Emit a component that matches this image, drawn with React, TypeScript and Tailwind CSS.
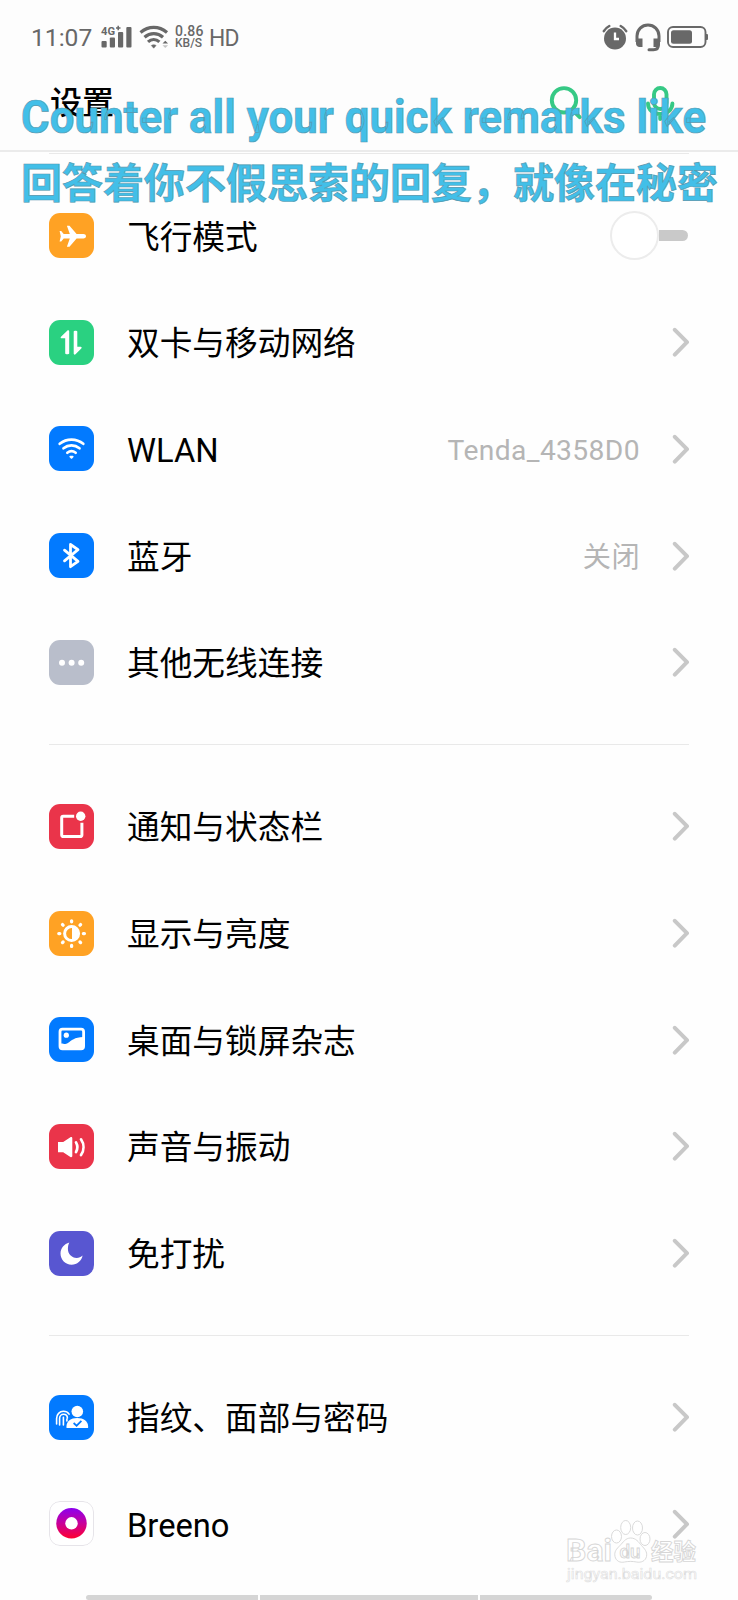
import { useState } from 'react';
import type { ReactNode } from 'react';

interface Item {
  label: string;
  color: string;
  icon: ReactNode;
  value?: string;
  toggle?: boolean;
}

const line = { fill: 'none', stroke: '#fff', strokeLinecap: 'round', strokeLinejoin: 'round' } as const;

// Todos los iconos se dibujan sobre una caja de 45x45
const AirplaneIcon = (
  <path
    fill="#fff"
    d="M37 23.2c0-1.300-1.100-2.200-2.600-2.200h-6.800L20.500 12.700h-2.600l2.900 8.300h-6.100l-2.500-3.100h-1.600l1.200 5.300-1.200 5.300h1.600l2.500-3.100h6.100l-2.900 8.300h2.600l7.100-8.300h6.800c1.500 0 2.600-.9 2.600-2.200z"
  />
);

const DataIcon = (
  <>
    <path fill="#fff" d="M20.200 11.500v22c0 .9-4 .9-4 0V18.300h-3.700c-.9 0-1.100-1-.5-1.600l6.200-6c.8-.7 2-.4 2 .8z" />
    <path fill="#fff" d="M24.700 33.500v-22c0-.9 3.600-.9 3.600 0v15.300h3.500c.9 0 1.100 1 .5 1.600l-5.800 5.900c-.7.700-1.800.3-1.800-.8z" />
  </>
);

const WlanIcon = (
  <g {...line} strokeWidth="2.700">
    <path d="M10.700 17.800c7-5.600 16.700-5.600 23.600 0" />
    <path d="M14.500 22.300c4.700-3.800 11.300-3.800 16 0" />
    <path d="M18.300 26.700c2.500-1.900 5.900-1.900 8.400 0" />
    <path d="M21.300 30.600h2.400l-1.200 1.200z" strokeWidth="1.800" fill="#fff" />
  </g>
);

const BluetoothIcon = <path {...line} strokeWidth="2.800" d="M15.500 17.200l13.500 11.100-7.500 5.400V11.500l7.500 5.200L15.500 27.800" />;

const DotsIcon = (
  <g fill="#fff">
    <circle cx="13" cy="22.700" r="3" />
    <circle cx="22.600" cy="22.700" r="3" />
    <circle cx="32.200" cy="22.700" r="3" />
  </g>
);

const NoticeIcon = (
  <>
    <path {...line} strokeWidth="3" strokeLinecap="butt" d="M25.200 12.200H14.300a1.600 1.600 0 0 0-1.600 1.600v17.200a1.600 1.600 0 0 0 1.600 1.600h17a1.600 1.600 0 0 0 1.600-1.600V18.800" />
    <circle cx="31.700" cy="12.300" r="4.700" fill="#fff" />
  </>
);

const BrightnessIcon = (
  <>
    <g {...line} strokeWidth="3.300">
      <path d="M22.600 9.800v1M22.600 34.400v1M9.800 22.600h1M34.400 22.600h1M13.500 13.600l.6.600M31 31l.6.600M31.600 13.600l-.6.600M14.100 31l-.6.600" />
    </g>
    <circle cx="22.600" cy="22.600" r="7" fill="none" stroke="#fff" strokeWidth="3" />
    <path fill="#fff" d="M23 15.800a6.800 6.800 0 0 1 0 13.600z" />
  </>
);

const WallpaperIcon = (
  <>
    <rect x="11" y="12.200" width="23.600" height="19.600" rx="2.500" {...line} strokeWidth="2.800" />
    <circle cx="17.300" cy="18.200" r="2.600" fill="#fff" />
    <path fill="#fff" d="M11 26.500c3-.6 4.800 1.600 7.500-.2 4.500-3 6.500-6 16-6.300v11.800H11z" />
  </>
);

const SoundIcon = (
  <>
    <path fill="#fff" d="M9 18h5.200l7.200-4.700c.9-.6 1.900-.2 1.900.9V32c0 1.100-1 1.500-1.900.9l-7.200-4.700H9z" />
    <g {...line} strokeWidth="2.700">
      <path d="M27 18.300c1.700 3 1.700 6.800 0 9.800" />
      <path d="M32 15.300c3.300 4.800 3.300 11 0 15.800" />
    </g>
  </>
);

const MoonIcon = (
  <path fill="#fff" d="M20.300 11.500c-5 1.300-8.800 5.700-8.800 11 0 6.200 4.900 11.200 11.100 11.200 5.500 0 10-3.900 11-9.200-1.700 1.500-3.600 2.400-5.900 2.400-5 0-8.800-4-8.800-8.900 0-2.400.4-4.600 1.400-6.500z" />
);

const FingerprintIcon = (
  <>
    <g {...line} strokeWidth="1.600">
      <path d="M7.600 29v-5.500c0-4.200 3-7.200 6.800-7.200 2.600 0 4.500 1.100 5.700 2.800" />
      <path d="M10.600 30v-6.500c0-2.400 1.700-4.200 3.900-4.200 2.200 0 3.900 1.500 3.900 3.800" />
      <path d="M14.400 30v-7.700M17.900 26v-2" />
    </g>
    <circle cx="28.300" cy="16.500" r="5.800" fill="#fff" />
    <path fill="#fff" d="M17.500 32.900v-1.600c0-5 4.300-8.300 10.700-8.300s10.900 3.300 10.900 8.300v1.600z" />
    <path fill="none" stroke="#027aff" strokeWidth="1.700" d="M24.600 28l3 2.700 4.800-4.900" />
  </>
);

const BreenoIcon = (
  <>
    <defs>
      <linearGradient id="breeno" x1="0" y1="0" x2="0" y2="1">
        <stop offset="0" stopColor="#8c00ef" />
        <stop offset="0.500" stopColor="#c8009a" />
        <stop offset="1" stopColor="#ff0030" />
      </linearGradient>
    </defs>
    <rect x="0.500" y="0.500" width="44" height="44" rx="10.500" fill="#fff" stroke="#e6e4e9" />
    <circle cx="22.500" cy="22.300" r="15.200" fill="url(#breeno)" />
    <circle cx="22.500" cy="22.300" r="6.200" fill="#fff" />
  </>
);

const GROUPS: Item[][] = [
  [
    { label: '飞行模式', color: 'bg-[#ffa224]', icon: AirplaneIcon, toggle: true },
    { label: '双卡与移动网络', color: 'bg-[#2ad181]', icon: DataIcon },
    { label: 'WLAN', color: 'bg-[#027aff]', icon: WlanIcon, value: 'Tenda_4358D0' },
    { label: '蓝牙', color: 'bg-[#027aff]', icon: BluetoothIcon, value: '关闭' },
    { label: '其他无线连接', color: 'bg-[#b9becb]', icon: DotsIcon },
  ],
  [
    { label: '通知与状态栏', color: 'bg-[#ea344a]', icon: NoticeIcon },
    { label: '显示与亮度', color: 'bg-[#ffa224]', icon: BrightnessIcon },
    { label: '桌面与锁屏杂志', color: 'bg-[#027aff]', icon: WallpaperIcon },
    { label: '声音与振动', color: 'bg-[#ea344a]', icon: SoundIcon },
    { label: '免打扰', color: 'bg-[#5856d1]', icon: MoonIcon },
  ],
  [
    { label: '指纹、面部与密码', color: 'bg-[#027aff]', icon: FingerprintIcon },
    { label: 'Breeno', color: 'bg-white', icon: BreenoIcon },
  ],
];

function StatusBar() {
  return (
    <div className="flex h-[74px] items-center pl-[31px] pr-[30px] text-[#686868]">
      <span className="w-[69px] pt-[2px] text-[24.600px] leading-none">11:07</span>
      {/* Señal */}
      <svg className="h-[24px] w-[32px]" viewBox="0 0 32 24" fill="#686868">
        <text x="1" y="9.500" fontSize="11" fontWeight="700" textLength="14" lengthAdjust="spacingAndGlyphs">4G</text>
        <path d="M16 3h4.500M18.200 0.800v4.500" stroke="#686868" strokeWidth="1.500" />
        <rect x="1.500" y="16" width="5.200" height="6.500" rx="1" />
        <rect x="9.800" y="12.500" width="5.200" height="10" rx="1" />
        <rect x="18" y="7" width="5.200" height="15.500" rx="1" />
        <rect x="26.300" y="2" width="5.200" height="20.500" rx="1" />
      </svg>
      {/* Wifi */}
      <svg className="ml-[7px] h-[24px] w-[30px]" viewBox="0 0 30 24" fill="none" stroke="#686868" strokeWidth="3.200">
        <path d="M1.500 7.500c8-6.800 18.500-6.800 26.500 0" />
        <path d="M5.500 12.200c5.500-4.800 13-4.800 18.500 0" />
        <path d="M9 16.900c3.400-3 8-3 11.400 0" />
        <path d="M12.300 20.500l2.400 2.700 2.400-2.700c-1.500-1.100-3.300-1.100-4.800 0z" fill="#686868" strokeWidth="0.500" />
        <path d="M23.500 18.500l2.800-2.700 2.800 2.700z" fill="#686868" stroke="none" />
        <path d="M23.500 20.300h5.600l-2.800 2.700z" fill="#c4c4c4" stroke="none" />
      </svg>
      <span className="ml-[6px] flex w-[34px] flex-col text-[12px] font-medium leading-[12px]">
        <span className="text-[14px] tracking-[0.200px]">0.86</span>
        <span>KB/S</span>
      </span>
      <span className="origin-left scale-x-[0.930] pt-[2px] text-[24.600px] leading-none tracking-[-1px]">HD</span>

      <div className="ml-auto flex items-center">
        {/* Alarma */}
        <svg className="h-[26px] w-[26px]" viewBox="0 0 26 26" fill="#686868">
          <circle cx="13" cy="14.500" r="11" />
          <path d="M1.800 7.200C3 5 5 3.200 7.300 2M24.200 7.200C23 5 21 3.200 18.700 2" fill="none" stroke="#686868" strokeWidth="2.500" strokeLinecap="round" />
          <path d="M13 8.500v6.500h4" fill="none" stroke="#fff" strokeWidth="2.300" />
        </svg>
        {/* Auriculares */}
        <svg className="ml-[7px] h-[29px] w-[26px]" viewBox="0 0 26 29" fill="none" stroke="#686868" strokeWidth="3">
          <path d="M2 19v-6C2 6.500 7 2 13 2s11 4.500 11 11v6" />
          <path d="M1 15.500h6.500V24H4.500C2.500 24 1 22.500 1 20.500zM25 15.500h-6.500V24h3c2 0 3.500-1.500 3.500-3.500z" fill="#686868" stroke="none" />
          <path d="M23.500 21.500c0 3.500-2 5.300-5 5.300h-4.500" strokeLinecap="round" />
        </svg>
        {/* Bateria */}
        <svg className="ml-[6px] h-[22px] w-[41px]" viewBox="0 0 41 22" fill="#686868">
          <rect x="1" y="1" width="37.500" height="20" rx="5" fill="none" stroke="#686868" strokeWidth="1.900" />
          <rect x="4" y="4.200" width="21" height="13.600" rx="2.500" />
          <path d="M39 8h1a1 1 0 0 1 1 1v4a1 1 0 0 1-1 1h-1z" />
        </svg>
      </div>
    </div>
  );
}

function Header() {
  return (
    <div className="flex h-[78px] items-start border-b-2 border-[#ebebeb] pl-[50px] pr-[61px]">
      <h1 className="mt-[10px] text-[32px] font-medium leading-[38px] text-black">设置</h1>
      <svg className="ml-auto mt-[11px] h-[36px] w-[34px]" viewBox="0 0 34 36" fill="none" stroke="#36c985" strokeWidth="3.900" strokeLinecap="round">
        <circle cx="15" cy="15.300" r="12.200" />
        <path d="M24 25.500l6.700 6.700" />
      </svg>
      <svg className="ml-[60px] mt-[11px] h-[38px] w-[34px]" viewBox="0 0 34 38" fill="none" stroke="#36c985" strokeWidth="3.900" strokeLinecap="round">
        <rect x="11" y="3" width="12.500" height="21" rx="6.250" />
        <path d="M5 18.500c0 6 5 10.500 12.200 10.500s12.200-4.500 12.200-10.500M17.200 29v5" />
      </svg>
    </div>
  );
}

function Switch() {
  const [on, setOn] = useState(false);
  return (
    <button type="button" role="switch" aria-checked={on} onClick={() => setOn(v => !v)} className="mr-[1px] flex w-[78px] items-center">
      {on && <span className="h-[11px] flex-1 rounded-l-full bg-[#2ad181]" />}
      <span className="h-[49px] w-[49px] rounded-full border-2 border-[#ececec] bg-white" />
      {!on && <span className="h-[11px] flex-1 rounded-r-full bg-[#c9c9c9]" />}
    </button>
  );
}

function Row({ item }: { item: Item }) {
  return (
    <div className="flex h-[106.700px] items-center">
      <div className={`h-[45px] w-[45px] overflow-hidden rounded-[11px] ${item.color}`}>
        <svg className="h-full w-full" viewBox="0 0 45 45">{item.icon}</svg>
      </div>
      <span className="ml-[33px] pt-[4px] text-[32.700px] leading-[48px] text-black">{item.label}</span>
      <div className="ml-auto flex items-center">
        {item.value && (
          <span className="mr-[31px] pt-[4px] text-[28.200px] leading-[40px] tracking-[0.400px] text-[#b5b5b5]">{item.value}</span>
        )}
        {item.toggle ? (
          <Switch />
        ) : (
          <svg className="h-[30px] w-[18px]" viewBox="0 0 18 30" fill="none" stroke="#c8c8c8" strokeWidth="4" strokeLinecap="round" strokeLinejoin="round">
            <path d="M3.800 2.800L16 15.200 3.800 27.600" />
          </svg>
        )}
      </div>
    </div>
  );
}

// Marca de agua de la esquina inferior
function Watermark() {
  return (
    <svg className="absolute left-[560px] top-[1515px] h-[75px] w-[145px]" viewBox="0 0 145 75" fill="#fff" stroke="#d6d6d6" strokeWidth="0.900">
      <text x="6" y="46" fontSize="31" fontWeight="700" textLength="46" lengthAdjust="spacingAndGlyphs">Bai</text>
      <ellipse cx="56.500" cy="21.500" rx="5" ry="6.500" />
      <ellipse cx="65.700" cy="12.500" rx="5" ry="7" />
      <ellipse cx="77.500" cy="13" rx="5" ry="7" />
      <ellipse cx="85" cy="24" rx="5" ry="6.500" />
      <path d="M70.500 23c-5 0-7.500 4.500-10.500 7.500-3.500 3.500-6 6-5 11 1 4.500 5 6.500 9.500 5.500 4-.8 8-.8 12 0 4.500.900 9-1 10-5.500 1-5-2-7.500-5-11-3-3.500-5.500-7.500-11-7.500z" />
      <text x="59.500" y="43" fontSize="19" fontWeight="500" textLength="21" lengthAdjust="spacingAndGlyphs">du</text>
      <text x="91" y="45" fontSize="23" fontWeight="700" textLength="45" lengthAdjust="spacingAndGlyphs">经验</text>
      <text x="7" y="64" fontSize="15" textLength="130" lengthAdjust="spacingAndGlyphs" stroke="#dedede" strokeWidth="0.600">jingyan.baidu.com</text>
    </svg>
  );
}

export default function App() {
  return (
    <div className="relative flex h-[1600px] w-[738px] flex-col overflow-hidden bg-[#fefefe] font-['Roboto','Noto_Sans_CJK_SC',sans-serif]">
      <div className="bg-[#fdfdfd]">
        <StatusBar />
        <Header />
      </div>

      <div className="px-[49px] pt-[1px]">
        {GROUPS.map((group, i) => (
          <div key={i} className="border-t-[1.500px] border-[#e9e9e9] py-[28.200px]">
            {group.map(item => <Row key={item.label} item={item} />)}
          </div>
        ))}
      </div>

      <Watermark />

      {/* Barra de navegacion */}
      <div className="absolute bottom-0 left-[86px] flex h-[5px] w-[566px] gap-[2px] overflow-hidden rounded-full">
        <span className="w-[172px] bg-[#d5d5d5]" />
        <span className="w-[218px] bg-[#d5d5d5]" />
        <span className="flex-1 bg-[#d5d5d5]" />
      </div>

      {/* Letra de la cancion flotante */}
      <div className="absolute left-[21px] top-[90px] whitespace-nowrap text-[#42bfe8] [-webkit-text-stroke:0.700px_#5599b0]">
        <p className="origin-left scale-x-[0.943] text-[46.500px] font-bold leading-[54px]">Counter all your quick remarks like</p>
        <p className="mt-[9px] text-[41px] font-bold leading-[62px]">回答着你不假思索的回复，就像在秘密</p>
      </div>
    </div>
  );
}
